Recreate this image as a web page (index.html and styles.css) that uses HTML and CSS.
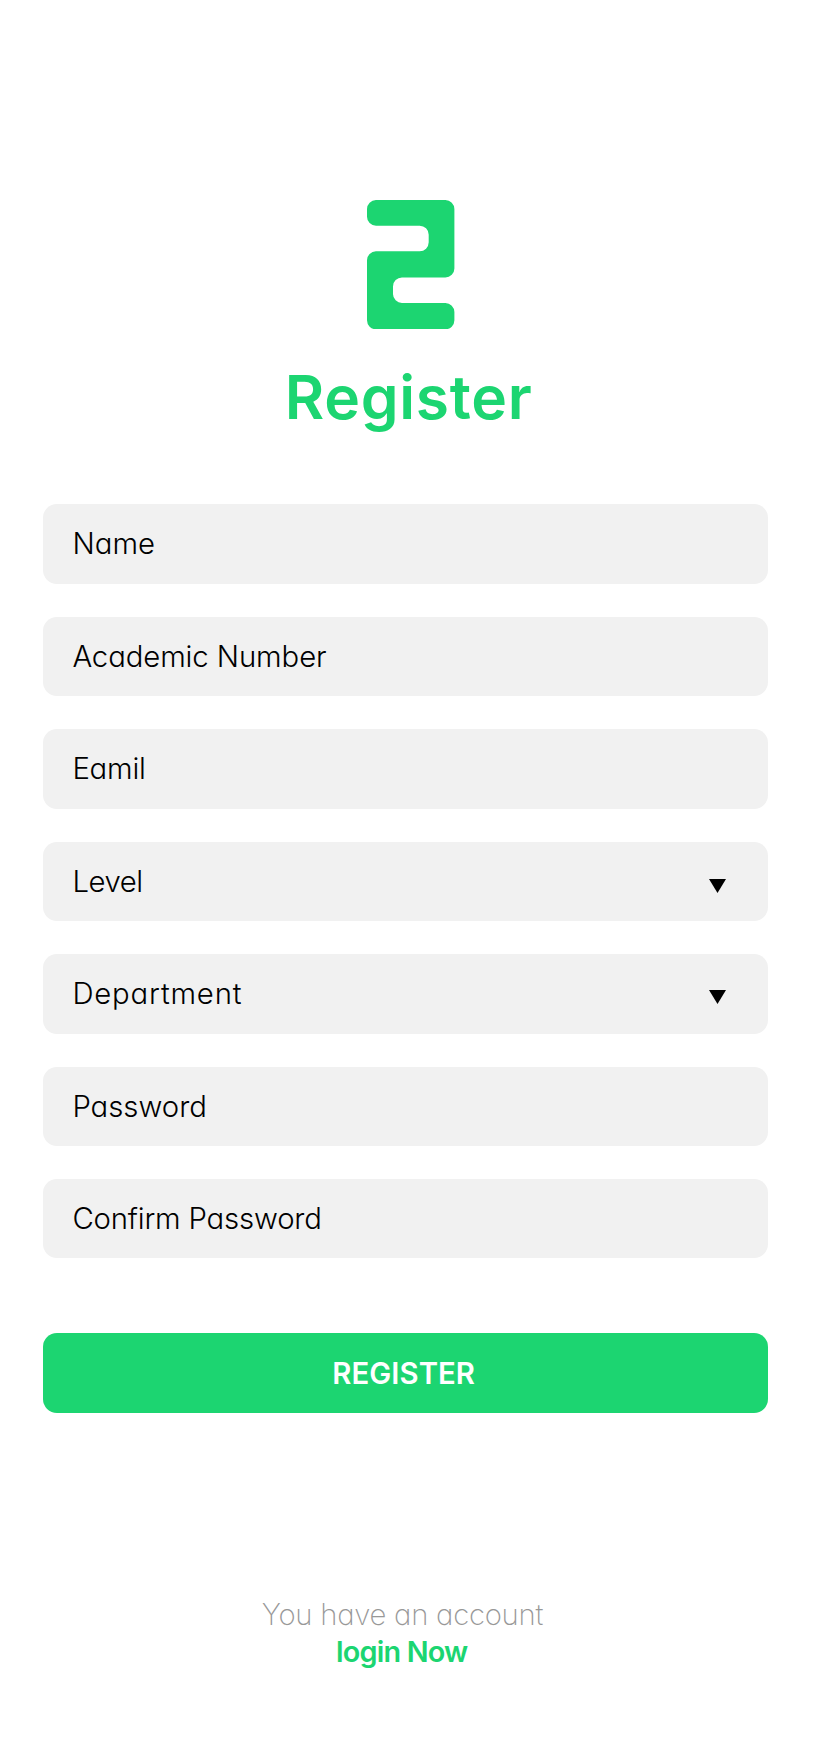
FILE: index.html
```
<!DOCTYPE html>
<html lang="en">
<head>
<meta charset="utf-8">
<title>Register</title>
<link rel="stylesheet" href="styles.css">
</head>
<body>
<main class="page">
  <svg class="logo" viewBox="0 0 87.4 129.3" aria-hidden="true">
    <path d="M9 0H78.4A9 9 0 0 1 87.4 9V68.4A9 9 0 0 1 78.4 77.4H35A9 9 0 0 0 26 86.4V94A9 9 0 0 0 35 103H78.4A9 9 0 0 1 87.4 112V120.3A9 9 0 0 1 78.4 129.3H9A9 9 0 0 1 0 120.3V60.3A9 9 0 0 1 9 51.3H52.7A9 9 0 0 0 61.7 42.3V34.7A9 9 0 0 0 52.7 25.7H9A9 9 0 0 1 0 16.7V9A9 9 0 0 1 9 0Z"/>
  </svg>
  <h1 class="title">Register</h1>
  <form class="form">
    <div class="field name">Name</div>
    <div class="field academic">Academic Number</div>
    <div class="field email">Eamil</div>
    <div class="field level">Level
      <svg class="arrow" viewBox="0 0 17 14" aria-hidden="true"><path d="M0 0H17L8.5 14Z"/></svg>
    </div>
    <div class="field department">Department
      <svg class="arrow arrow-high" viewBox="0 0 17 14" aria-hidden="true"><path d="M0 0H17L8.5 14Z"/></svg>
    </div>
    <div class="field password">Password</div>
    <div class="field confirm">Confirm Password</div>
    <button class="submit" type="button">REGISTER</button>
  </form>
  <footer class="footer">
    <div class="question">You have an account</div>
    <div class="login">login Now</div>
  </footer>
</main>
</body>
</html>
```
FILE: styles.css
```
* {
  box-sizing: border-box;
}

body {
  margin: 0;
  background: #fff;
  font-family: Inter, "Liberation Sans", sans-serif;
  font-feature-settings: "cv11";
  font-size: 29.3px;
}

.page {
  width: 725px;
  height: 1746px;
  margin-left: 42.7px;
  padding-top: 200px;
  display: flex;
  flex-direction: column;
}

.logo {
  width: 87.4px;
  height: 129.3px;
  margin-left: 324.8px;
  fill: #1cd571;
}

.title {
  margin: 32.2px 0 70.7px;
  padding-left: 7px;
  color: #1cd571;
  font-size: 60.5px;
  font-weight: 600;
  line-height: 72px;
  letter-spacing: 0.72px;
  text-align: center;
}

.form {
  display: flex;
  flex-direction: column;
  gap: 33.1px;
}

.field {
  display: flex;
  align-items: center;
  justify-content: space-between;
  height: 79.4px;
  padding: 0 41.5px 0 29.7px;
  border-radius: 14px;
  background: #f1f1f1;
  color: #000;
  font-weight: 300;
}

.name { letter-spacing: 0.08px; }
.academic { letter-spacing: -0.09px; }
.email { letter-spacing: -0.2px; }
.level { letter-spacing: -0.45px; }
.department { letter-spacing: 0.84px; }
.password { letter-spacing: 0; }
.confirm { letter-spacing: -0.17px; }

.arrow {
  width: 17px;
  height: 14px;
  margin-top: 9px;
  fill: #000;
}

.arrow-high {
  margin-top: 6px;
}

.submit {
  height: 79.7px;
  margin-top: 41.6px;
  padding: 1px 3px 0 0;
  border: 0;
  border-radius: 14px;
  background: #1cd571;
  color: #fff;
  font: inherit;
  font-weight: 600;
  letter-spacing: 0.07px;
}

.footer {
  margin-top: 183.4px;
  line-height: 37px;
  text-align: center;
}

.question {
  padding-right: 5.5px;
  color: #989898;
  font-weight: 200;
  letter-spacing: -0.26px;
}

.login {
  padding-right: 7px;
  color: #1cd571;
  font-size: 28.8px;
  font-weight: 600;
  letter-spacing: -0.8px;
}
```
